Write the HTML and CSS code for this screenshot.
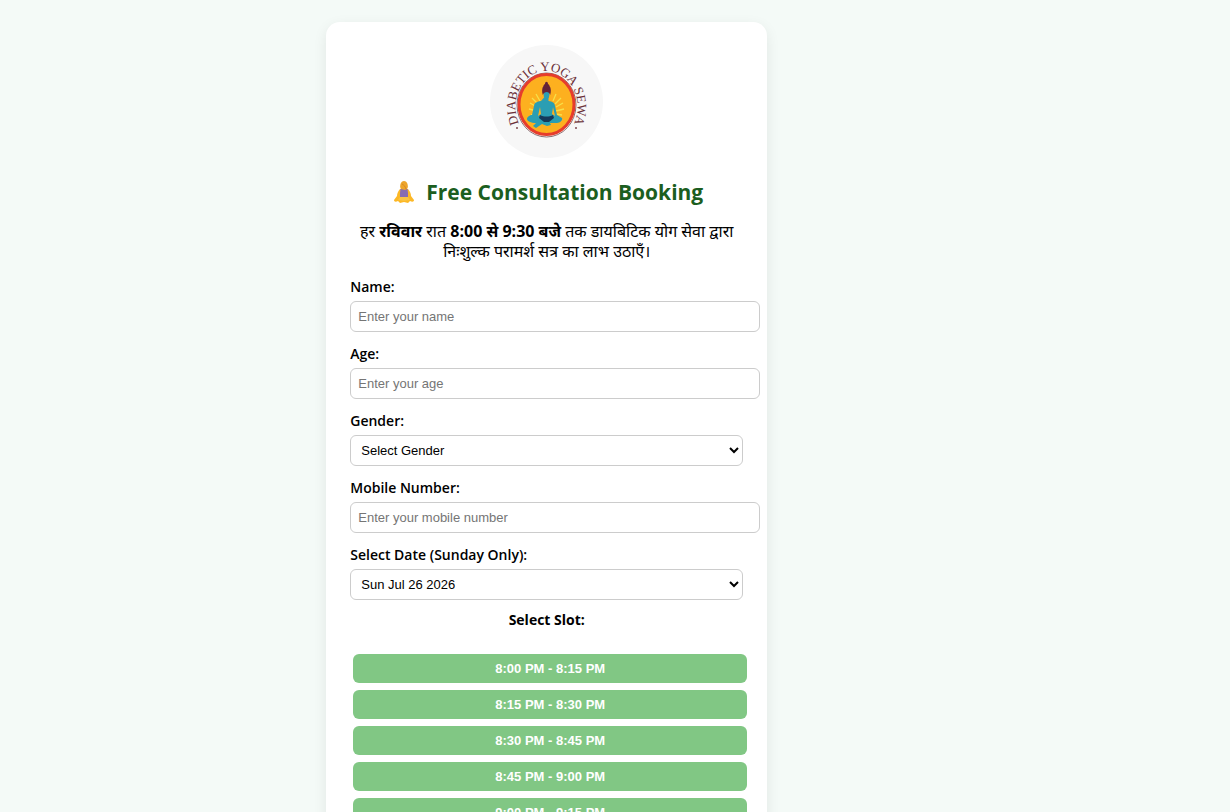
FILE: index.html
```html
<!DOCTYPE html>
<html lang="en">
<head>
<meta charset="utf-8">
<meta name="viewport" content="width=device-width, initial-scale=1">
<title>Free Consultation Booking</title>
<link rel="stylesheet" href="styles.css">
</head>
<body>
<main class="page">
  <form class="card">
    <svg class="logo" viewBox="0 0 113 113" role="img" aria-label="Diabetic Yoga Sewa">
      <defs><path id="ring" d="M29.700 80A31 36 0 1 1 83.300 80"/></defs>
      <circle cx="56.500" cy="56.500" r="56.500" fill="#f7f7f7"/>
      <text class="logo-text"><textPath href="#ring" startOffset="50%" text-anchor="middle">DIABETIC YOGA SEWA</textPath></text>
      <circle cx="27" cy="83" r="1" fill="#7d4a50"/>
      <circle cx="86" cy="83" r="1" fill="#7d4a50"/>
      <ellipse cx="56.500" cy="60" rx="29.500" ry="32" fill="#fff" stroke="#6e4a4c" stroke-width=".8"/>
      <ellipse cx="56.500" cy="59.500" rx="27.500" ry="30" fill="#fdb01f" stroke="#e63c2c" stroke-width="3"/>
      <path d="M47 66L39 64M47 62L40 58M48 59L42 53M50 56L46 49M66 66L74 64M66 62L73 58M65 59L71 53M63 56L66 49M47 69L41 70M66 69L72 70" stroke="#f7e04a" stroke-width="1.300" fill="none"/>
      <path d="M54.500 52h4v4c4 .5 6 1.500 6.500 5l2 9 5 3c1 2-2 5-5 5l-7 0 1 2-4 1-5-2-6 4-3-2 3-3c-5 0-9-2-9-4s3-4 5-4l2-9c.5-3.500 3-4.500 7-5z" fill="#2b9eb3"/>
      <path d="M50 62l-2 9 3-2zM63 62l2 9-3-2z" fill="#fdb01f"/>
      <path d="M50 70c4 2 9 2 13 0l1 3-5 4h-5l-5-4z" fill="#153a5b"/>
      <ellipse cx="56.500" cy="49.500" rx="2.900" ry="4.200" fill="#2b9eb3"/>
      <path d="M52.800 50c-1-3-1-7 .7-9 0-1 1-2 1.500-2 0-3 3-3 3 0 .5 0 1.500 1 1.500 2 1.700 2 1.700 6 .7 9-1-4-6-4-7.400 0z" fill="#662338"/>
    </svg>

    <h1 class="title">
      <svg class="title-icon" viewBox="0 0 20 22" aria-hidden="true">
        <path d="M6 8C4 10 3 13 3 15L0 19c0 2 2 2 4 1l2 2 4-1 4 1 2-2c2 1 4 1 4-1l-3-4c0-2-1-5-3-7z" fill="#fcb826"/>
        <path d="M6.500 8h7l.5 4v5H6v-5z" fill="#876bb2"/>
        <path d="M6 16h8l2 3-6 1-6-1z" fill="#f9c344"/>
        <path d="M6.500 3c1-4 6-4 7 0 .5 2 .5 4-.5 5l-2 1-4-1c-1-1-1-3-.5-5z" fill="#eda52b"/>
        <path d="M8 3c2 1 3 2 4 5" stroke="#d98723" fill="none"/>
      </svg>
      <span>Free Consultation Booking</span>
    </h1>

    <p class="intro" lang="hi">हर <strong>रविवार</strong> रात <strong>8:00 से 9:30 बजे</strong> तक डायबिटिक योग सेवा द्वारा निःशुल्क परामर्श सत्र का लाभ उठाएँ।</p>

    <div class="field">
      <label class="label" for="name">Name:</label>
      <input class="control text-control" id="name" type="text" placeholder="Enter your name">
    </div>
    <div class="field">
      <label class="label" for="age">Age:</label>
      <input class="control text-control" id="age" type="text" inputmode="numeric" placeholder="Enter your age">
    </div>
    <div class="field">
      <label class="label" for="gender">Gender:</label>
      <select class="control select-control" id="gender"><option>Select Gender</option></select>
    </div>
    <div class="field">
      <label class="label" for="mobile">Mobile Number:</label>
      <input class="control text-control" id="mobile" type="tel" placeholder="Enter your mobile number">
    </div>
    <div class="field">
      <label class="label" for="date">Select Date (Sunday Only):</label>
      <select class="control select-control" id="date"><option>Sun Jul 26 2026</option></select>
    </div>

    <h2 class="slot-title">Select Slot:</h2>
    <div class="slots">
      <button class="slot" type="button">8:00 PM - 8:15 PM</button>
      <button class="slot" type="button">8:15 PM - 8:30 PM</button>
      <button class="slot" type="button">8:30 PM - 8:45 PM</button>
      <button class="slot" type="button">8:45 PM - 9:00 PM</button>
      <button class="slot" type="button">9:00 PM - 9:15 PM</button>
    </div>
  </form>
</main>
</body>
</html>
```

FILE: styles.css
```css
body {
  margin: 0;
  background: #f4faf7;
  color: #000;
  font-family: "Open Sans", "Noto Sans", sans-serif;
}

.page {
  width: 88.9%;
  padding: 22px 0;
}

.card {
  box-sizing: border-box;
  max-width: 441px;
  margin: 0 auto;
  padding: 23px 24px;
  background: #fff;
  border-radius: 14px;
  box-shadow: 0 4px 14px rgba(0, 0, 0, 0.08);
}

.logo {
  display: block;
  width: 113px;
  height: 113px;
  margin: 0 auto;
}

.logo-text {
  font: 13px "Liberation Serif", serif;
  fill: #6b3038;
}

.title {
  display: flex;
  justify-content: center;
  align-items: center;
  gap: 12px;
  margin: 18px 0 13px;
  padding-left: 4px;
  color: #1b5e20;
  font-size: 21px;
  line-height: 32px;
  white-space: nowrap;
}

.title-icon {
  width: 20px;
  height: 22px;
}

.intro {
  margin: 0 0 16px;
  font-size: 16px;
  line-height: 20px;
  text-align: center;
}

.field {
  margin-bottom: 12px;
}

.label {
  display: block;
  margin-bottom: 4px;
  font-size: 14px;
  font-weight: 600;
  line-height: 20px;
}

.control {
  display: block;
  width: 100%;
  height: 31px;
  border: 1px solid #ccc;
  border-radius: 6px;
  background: #fff;
  color: #000;
  font: 13px "Liberation Sans", Arial, sans-serif;
}

.text-control {
  box-sizing: content-box;
  height: 29px;
  padding: 0 8px 0 7px;
}

.text-control::placeholder {
  color: #757575;
}

.select-control {
  box-sizing: border-box;
  padding: 0 2px 0 6px;
}

.slot-title {
  margin: -2px 0 24px;
  font-size: 14px;
  line-height: 20px;
  text-align: center;
}

.slots {
  display: grid;
  gap: 7px;
  margin: 0 -4px 0 3px;
}

.slot {
  height: 29px;
  padding: 0;
  border: 0;
  border-radius: 6px;
  background: #81c784;
  color: #fff;
  font: bold 13px "Liberation Sans", Arial, sans-serif;
}
```
